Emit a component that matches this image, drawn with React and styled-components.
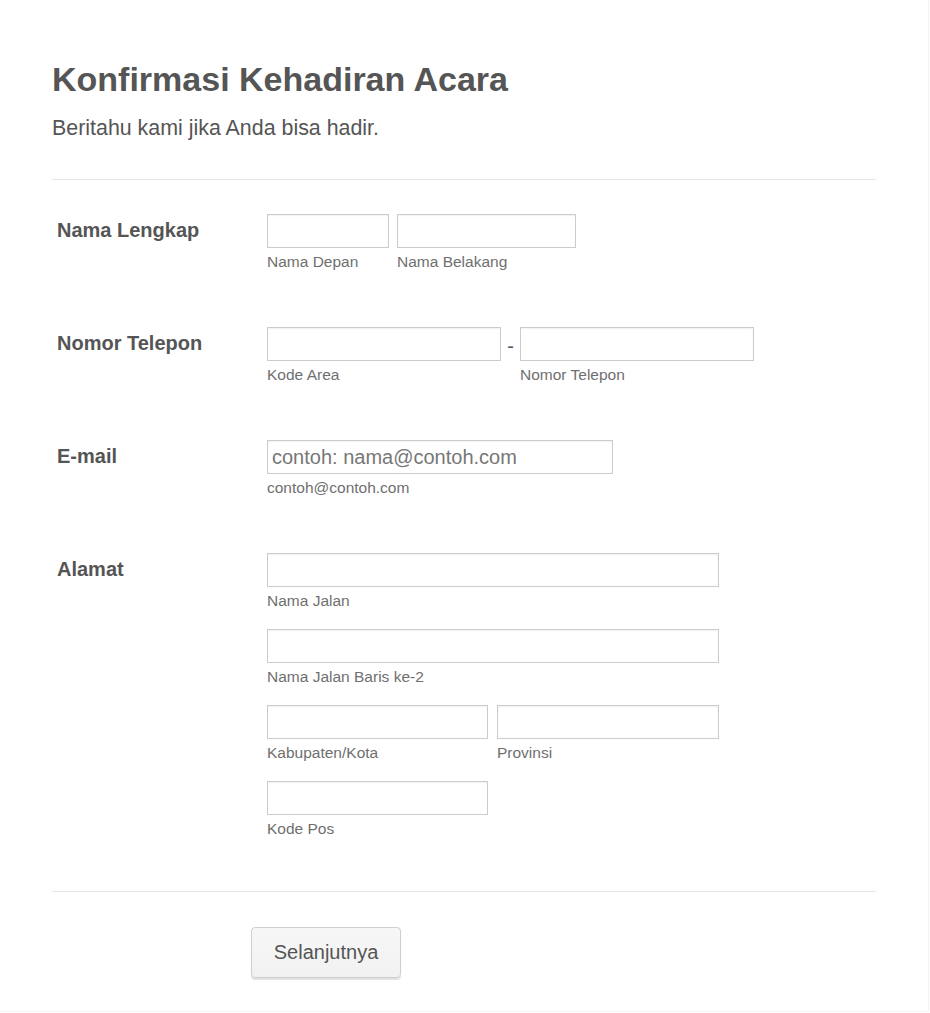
import React from "react";
import styled, { createGlobalStyle } from "styled-components";

const GlobalStyle = createGlobalStyle`
  body {
    margin: 0;
    background: #ffffff;
    font-family: "Liberation Sans", Arial, sans-serif;
    color: #555555;
  }
`;

const FormCard = styled.div`
  width: 929px;
  min-height: 1012px;
  box-sizing: border-box;
  padding: 0 52px;
  border-right: 1px solid #f3f3f3;
  border-bottom: 1px solid #f3f3f3;
`;

const Header = styled.div`
  padding: 59px 0 39px;
  border-bottom: 1px solid #e6e6e6;
`;

const Title = styled.h1`
  margin: 0;
  font-size: 34px;
  line-height: 40px;
  font-weight: bold;
  color: #555555;
`;

const Subtitle = styled.p`
  margin: 17px 0 0;
  font-size: 21.4px;
  line-height: 24px;
  color: #555555;
`;

const Fields = styled.div`
  padding-top: 34px;
  border-bottom: 1px solid #e6e6e6;
`;

const Row = styled.div`
  display: flex;
  align-items: flex-start;
  padding-bottom: 55px;

  &:last-child {
    padding-bottom: 52px;
  }
`;

const Label = styled.div`
  width: 210px;
  flex-shrink: 0;
  padding-left: 5px;
  margin-top: 4px;
  font-size: 20px;
  line-height: 24px;
  font-weight: bold;
  color: #555555;
`;

const Controls = styled.div`
  display: flex;
  flex-direction: column;
  gap: 18px;
`;

const Line = styled.div`
  display: flex;
  align-items: flex-start;
  gap: ${(p) => p.gap ?? 9}px;
`;

const Field = styled.div`
  display: flex;
  flex-direction: column;
  width: ${(p) => p.w}px;
`;

const Input = styled.input`
  box-sizing: border-box;
  width: 100%;
  height: 34px;
  margin: 0;
  padding: 0 4px;
  border: 1px solid #cccccc;
  border-radius: 0;
  box-shadow: inset 0 1px 2px rgba(0, 0, 0, 0.06);
  background: #ffffff;
  font-family: "Liberation Sans", Arial, sans-serif;
  font-size: 20px;
  color: #555555;
  outline: none;

  &::placeholder {
    color: #777777;
  }
`;

const SubLabel = styled.span`
  margin-top: 4px;
  font-size: 15.5px;
  line-height: 20px;
  color: #6f6f6f;
  white-space: nowrap;
`;

const Dash = styled.span`
  width: 19px;
  text-align: center;
  font-size: 20px;
  line-height: 38px;
  color: #555555;
`;

const Footer = styled.div`
  padding: 35px 0 0 199px;
`;

const NextButton = styled.button`
  width: 150px;
  height: 51px;
  border: 1px solid #cfcfcf;
  border-radius: 4px;
  background: linear-gradient(#f7f7f7, #f1f1f1);
  box-shadow: 0 2px 1px rgba(0, 0, 0, 0.12);
  font-family: "Liberation Sans", Arial, sans-serif;
  font-size: 20px;
  color: #555555;
  cursor: pointer;
`;

const TextField = ({ w, sub, placeholder }) => (
  <Field w={w}>
    <Input type="text" placeholder={placeholder} />
    <SubLabel>{sub}</SubLabel>
  </Field>
);

export default function App() {
  return (
    <>
      <GlobalStyle />
      <FormCard>
        <Header>
          <Title>Konfirmasi Kehadiran Acara</Title>
          <Subtitle>Beritahu kami jika Anda bisa hadir.</Subtitle>
        </Header>

        <Fields>
          <Row>
            <Label>Nama Lengkap</Label>
            <Line gap={8}>
              <TextField w={122} sub="Nama Depan" />
              <TextField w={179} sub="Nama Belakang" />
            </Line>
          </Row>

          <Row>
            <Label>Nomor Telepon</Label>
            <Line gap={0}>
              <TextField w={234} sub="Kode Area" />
              <Dash>-</Dash>
              <TextField w={234} sub="Nomor Telepon" />
            </Line>
          </Row>

          <Row>
            <Label>E-mail</Label>
            <Line>
              <TextField
                w={346}
                sub="contoh@contoh.com"
                placeholder="contoh: nama@contoh.com"
              />
            </Line>
          </Row>

          <Row>
            <Label>Alamat</Label>
            <Controls>
              <TextField w={452} sub="Nama Jalan" />
              <TextField w={452} sub="Nama Jalan Baris ke-2" />
              <Line>
                <TextField w={221} sub="Kabupaten/Kota" />
                <TextField w={222} sub="Provinsi" />
              </Line>
              <TextField w={221} sub="Kode Pos" />
            </Controls>
          </Row>
        </Fields>

        <Footer>
          <NextButton type="button">Selanjutnya</NextButton>
        </Footer>
      </FormCard>
    </>
  );
}
